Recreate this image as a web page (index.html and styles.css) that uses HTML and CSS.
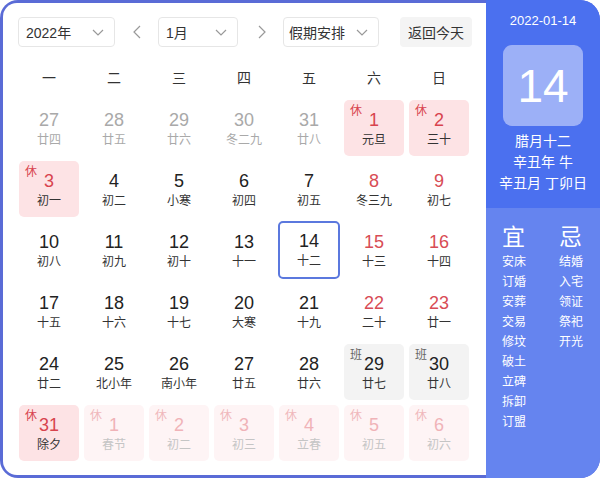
FILE: index.html
```html
<!DOCTYPE html>
<html lang="zh">
<head>
<meta charset="utf-8">
<link rel="stylesheet" href="styles.css">
</head>
<body>
<div class="app">
  <div class="main">
    <div class="toolbar">
      <div class="select sel-year"><span>2022年</span><svg class="chev" viewBox="0 0 12 7"><path d="M1 1l5 5 5-5"/></svg></div>
      <div class="arrow"><svg viewBox="0 0 8 14"><path d="M7 1L1 7l6 6"/></svg></div>
      <div class="select sel-month"><span>1月</span><svg class="chev" viewBox="0 0 12 7"><path d="M1 1l5 5 5-5"/></svg></div>
      <div class="arrow arrow-next"><svg viewBox="0 0 8 14"><path d="M1 1l6 6-6 6"/></svg></div>
      <div class="select sel-hol"><span>假期安排</span><svg class="chev" viewBox="0 0 12 7"><path d="M1 1l5 5 5-5"/></svg></div>
      <div class="btn">返回今天</div>
    </div>
    <div class="weekdays">
      <span>一</span><span>二</span><span>三</span><span>四</span><span>五</span><span>六</span><span>日</span>
    </div>
    <div class="grid">
      <div class="cell other"><b>27</b><i>廿四</i></div>
      <div class="cell other"><b>28</b><i>廿五</i></div>
      <div class="cell other"><b>29</b><i>廿六</i></div>
      <div class="cell other"><b>30</b><i>冬二九</i></div>
      <div class="cell other"><b>31</b><i>廿八</i></div>
      <div class="cell hol"><em>休</em><b>1</b><i>元旦</i></div>
      <div class="cell hol"><em>休</em><b>2</b><i>三十</i></div>

      <div class="cell hol"><em>休</em><b>3</b><i>初一</i></div>
      <div class="cell"><b>4</b><i>初二</i></div>
      <div class="cell"><b>5</b><i>小寒</i></div>
      <div class="cell"><b>6</b><i>初四</i></div>
      <div class="cell"><b>7</b><i>初五</i></div>
      <div class="cell wk"><b>8</b><i>冬三九</i></div>
      <div class="cell wk"><b>9</b><i>初七</i></div>

      <div class="cell"><b>10</b><i>初八</i></div>
      <div class="cell"><b>11</b><i>初九</i></div>
      <div class="cell"><b>12</b><i>初十</i></div>
      <div class="cell"><b>13</b><i>十一</i></div>
      <div class="cell today"><b>14</b><i>十二</i></div>
      <div class="cell wk"><b>15</b><i>十三</i></div>
      <div class="cell wk"><b>16</b><i>十四</i></div>

      <div class="cell"><b>17</b><i>十五</i></div>
      <div class="cell"><b>18</b><i>十六</i></div>
      <div class="cell"><b>19</b><i>十七</i></div>
      <div class="cell"><b>20</b><i>大寒</i></div>
      <div class="cell"><b>21</b><i>十九</i></div>
      <div class="cell wk"><b>22</b><i>二十</i></div>
      <div class="cell wk"><b>23</b><i>廿一</i></div>

      <div class="cell"><b>24</b><i>廿二</i></div>
      <div class="cell"><b>25</b><i>北小年</i></div>
      <div class="cell"><b>26</b><i>南小年</i></div>
      <div class="cell"><b>27</b><i>廿五</i></div>
      <div class="cell"><b>28</b><i>廿六</i></div>
      <div class="cell work"><em>班</em><b>29</b><i>廿七</i></div>
      <div class="cell work"><em>班</em><b>30</b><i>廿八</i></div>

      <div class="cell hol"><em>休</em><b>31</b><i>除夕</i></div>
      <div class="cell hol next"><em>休</em><b>1</b><i>春节</i></div>
      <div class="cell hol next"><em>休</em><b>2</b><i>初二</i></div>
      <div class="cell hol next"><em>休</em><b>3</b><i>初三</i></div>
      <div class="cell hol next"><em>休</em><b>4</b><i>立春</i></div>
      <div class="cell hol next"><em>休</em><b>5</b><i>初五</i></div>
      <div class="cell hol next"><em>休</em><b>6</b><i>初六</i></div>
    </div>
  </div>
  <div class="side">
    <div class="side-top">
      <div class="date">2022-01-14</div>
      <div class="bigday">14</div>
      <div class="lunar">
        <div>腊月十二</div>
        <div>辛丑年 牛</div>
        <div>辛丑月 丁卯日</div>
      </div>
    </div>
    <div class="side-bottom">
      <div class="col">
        <div class="head">宜</div>
        <div>安床</div><div>订婚</div><div>安葬</div><div>交易</div><div>修坟</div><div>破土</div><div>立碑</div><div>拆卸</div><div>订盟</div>
      </div>
      <div class="col">
        <div class="head">忌</div>
        <div>结婚</div><div>入宅</div><div>领证</div><div>祭祀</div><div>开光</div>
      </div>
    </div>
  </div>
</div>
</body>
</html>
```
FILE: styles.css
```css
* { box-sizing: border-box; }
html, body { margin: 0; padding: 0; background: #fff; }
body {
  font-family: "Liberation Sans", "Noto Sans CJK SC", sans-serif;
  color: #333;
}
.app {
  width: 600px;
  height: 478px;
  display: flex;
  background: #5a6bd6;
  border-radius: 18px 20px 20px 18px;
  overflow: hidden;
}
.main {
  width: 483px;
  margin: 3px 0 3px 3px;
  background: #fff;
  border-radius: 14px 0 0 14px;
  padding: 14px 0 0 15px;
}
.toolbar {
  display: flex;
  align-items: center;
  height: 30px;
}
.select {
  height: 30px;
  border: 1px solid #e6e6e6;
  border-radius: 4px;
  display: flex;
  align-items: center;
  justify-content: space-between;
  padding: 0 10px 0 7px;
  font-size: 14px;
  color: #333;
}
.sel-year { width: 97px; }
.sel-month { width: 80px; }
.sel-hol { width: 96px; padding-left: 5px; }
.chev { width: 12px; height: 7px; }
.chev path, .arrow path {
  fill: none;
  stroke: #999;
  stroke-width: 1.2;
}
.arrow {
  width: 43px;
  display: flex;
  justify-content: center;
}
.arrow-next { width: 45px; padding-left: 2px; }
.arrow svg { width: 8px; height: 14px; }
.btn {
  margin-left: 21px;
  width: 72px;
  height: 30px;
  border-radius: 4px;
  background: #f4f4f4;
  font-size: 14px;
  display: flex;
  align-items: center;
  justify-content: center;
  color: #333;
}
.weekdays {
  margin: 17px 0 0 1px;
  width: 450px;
  display: grid;
  grid-template-columns: repeat(7, 60px);
  column-gap: 5px;
  height: 26px;
  align-items: center;
  text-align: center;
  font-size: 14px;
  color: #333;
}
.grid {
  margin: 10px 0 0 1px;
  width: 450px;
  display: grid;
  grid-template-columns: repeat(7, 60px);
  grid-auto-rows: 56px;
  gap: 5px;
}
.cell {
  position: relative;
  border-radius: 5px;
  display: flex;
  flex-direction: column;
  align-items: center;
  padding-top: 9px;
}
.cell b {
  font-weight: normal;
  font-size: 18px;
  line-height: 22px;
  color: #222;
}
.cell i {
  font-style: normal;
  font-size: 12px;
  line-height: 18px;
  color: #333;
}
.cell em {
  position: absolute;
  left: 6px;
  top: 3px;
  font-style: normal;
  font-size: 12px;
  line-height: 16px;
}
.other b, .other i { color: #a9a9a9; }
.wk b { color: #d84c55; }
.hol { background: #fde3e5; }
.hol b { color: #d8434e; }
.hol em { color: #d8434e; }
.hol.next { background: #fef4f5; }
.hol.next b { color: #f0b3b8; }
.hol.next em { color: #f0b8bc; }
.hol.next i { color: #c5c5c5; }
.work { background: #f3f3f3; }
.work em { color: #666; }
.today {
  border: 2px solid #5b78de;
  border-radius: 5px;
  padding-top: 7px;
  margin: -1px 0 0 -1px;
  width: 62px;
  height: 58px;
}
.side {
  width: 114px;
  display: flex;
  flex-direction: column;
  color: #fff;
}
.side-top {
  height: 208px;
  background: #4b70ef;
  display: flex;
  flex-direction: column;
  align-items: center;
  padding-top: 12px;
}
.date {
  font-size: 13px;
  line-height: 18px;
}
.bigday {
  margin-top: 15px;
  width: 80px;
  height: 81px;
  border-radius: 9px;
  background: #9cb0f7;
  font-size: 46px;
  font-weight: 300;
  font-family: "Liberation Sans", "DejaVu Sans", sans-serif;
  display: flex;
  align-items: center;
  justify-content: center;
}
.lunar {
  margin-top: 5px;
  font-size: 14px;
  line-height: 21px;
  text-align: center;
}
.side-bottom {
  flex: 1;
  background: #6584ef;
  display: flex;
  padding: 14px 0 0 16px;
  gap: 33px;
}
.col {
  font-size: 12px;
  line-height: 20px;
}
.col .head {
  font-size: 23px;
  line-height: 30px;
  margin-bottom: 0px;
}
```
